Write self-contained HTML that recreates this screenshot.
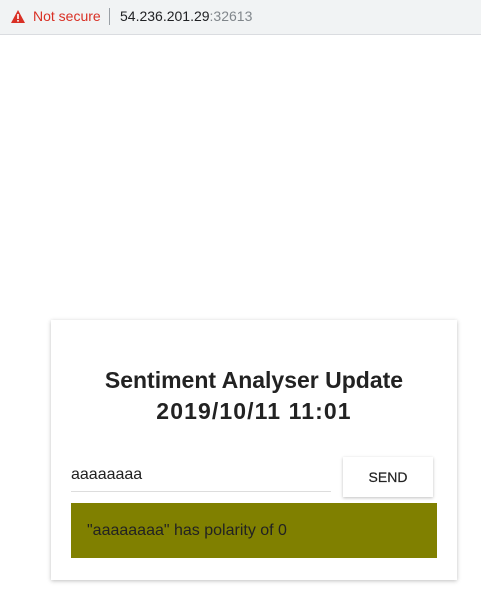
<!DOCTYPE html>
<html><head><style>
body{margin:0;width:481px;height:609px;background:#fff;font-family:"Liberation Sans",sans-serif;position:relative;overflow:hidden}
.bar{position:absolute;left:0;top:0;width:481px;height:34px;background:#f1f3f4;border-bottom:1px solid #dadce0}
.ns{position:absolute;left:33px;top:8px;font-size:14px;color:#d93025}
.sep{position:absolute;left:109px;top:8px;width:1px;height:17px;background:#9aa0a6}
.url{position:absolute;left:120px;top:8px;font-size:14px;color:#202124}
.url span{color:#80868b}
.card{position:absolute;left:51px;top:320px;width:406px;height:260px;background:#fff;box-shadow:0 1px 4px rgba(0,0,0,.25)}
h1{position:absolute;left:0;top:45px;width:406px;margin:0;text-align:center;font-size:23px;line-height:31px;font-weight:bold;color:#222}
h1 span{letter-spacing:1.1px}
.inp{position:absolute;left:20px;top:146px;font-size:16px;color:#222}
.line{position:absolute;left:20px;top:171px;width:260px;height:1px;background:#ddd}
.btn{position:absolute;left:292px;top:137px;width:90px;height:40px;background:#fff;box-shadow:0 1px 3px rgba(0,0,0,.25);font-size:14px;line-height:40px;text-align:center;color:#222;font-weight:500;-webkit-text-stroke:0.2px #222}
.res{position:absolute;left:20px;top:183px;width:366px;height:55px;background:#808000;color:#222;font-size:16px;line-height:55px;box-sizing:border-box;padding-left:16px}
</style></head><body>
<div class="bar">
<svg style="position:absolute;left:11px;top:10px" width="14" height="13" viewBox="0 0 14 13"><path d="M7 0L14 13H0Z" fill="#d93025"/><rect x="6.2" y="4" width="1.6" height="5" fill="#fff"/><rect x="6.2" y="10" width="1.6" height="1.6" fill="#fff"/></svg>
<div class="ns">Not secure</div><div class="sep"></div>
<div class="url">54.236.201.29<span>:32613</span></div>
</div>
<div class="card">
<h1>Sentiment Analyser Update<br><span>2019/10/11 11:01</span></h1>
<div class="inp">aaaaaaaa</div><div class="line"></div>
<div class="btn">SEND</div>
<div class="res">"aaaaaaaa" has polarity of 0</div>
</div>
</body></html>
